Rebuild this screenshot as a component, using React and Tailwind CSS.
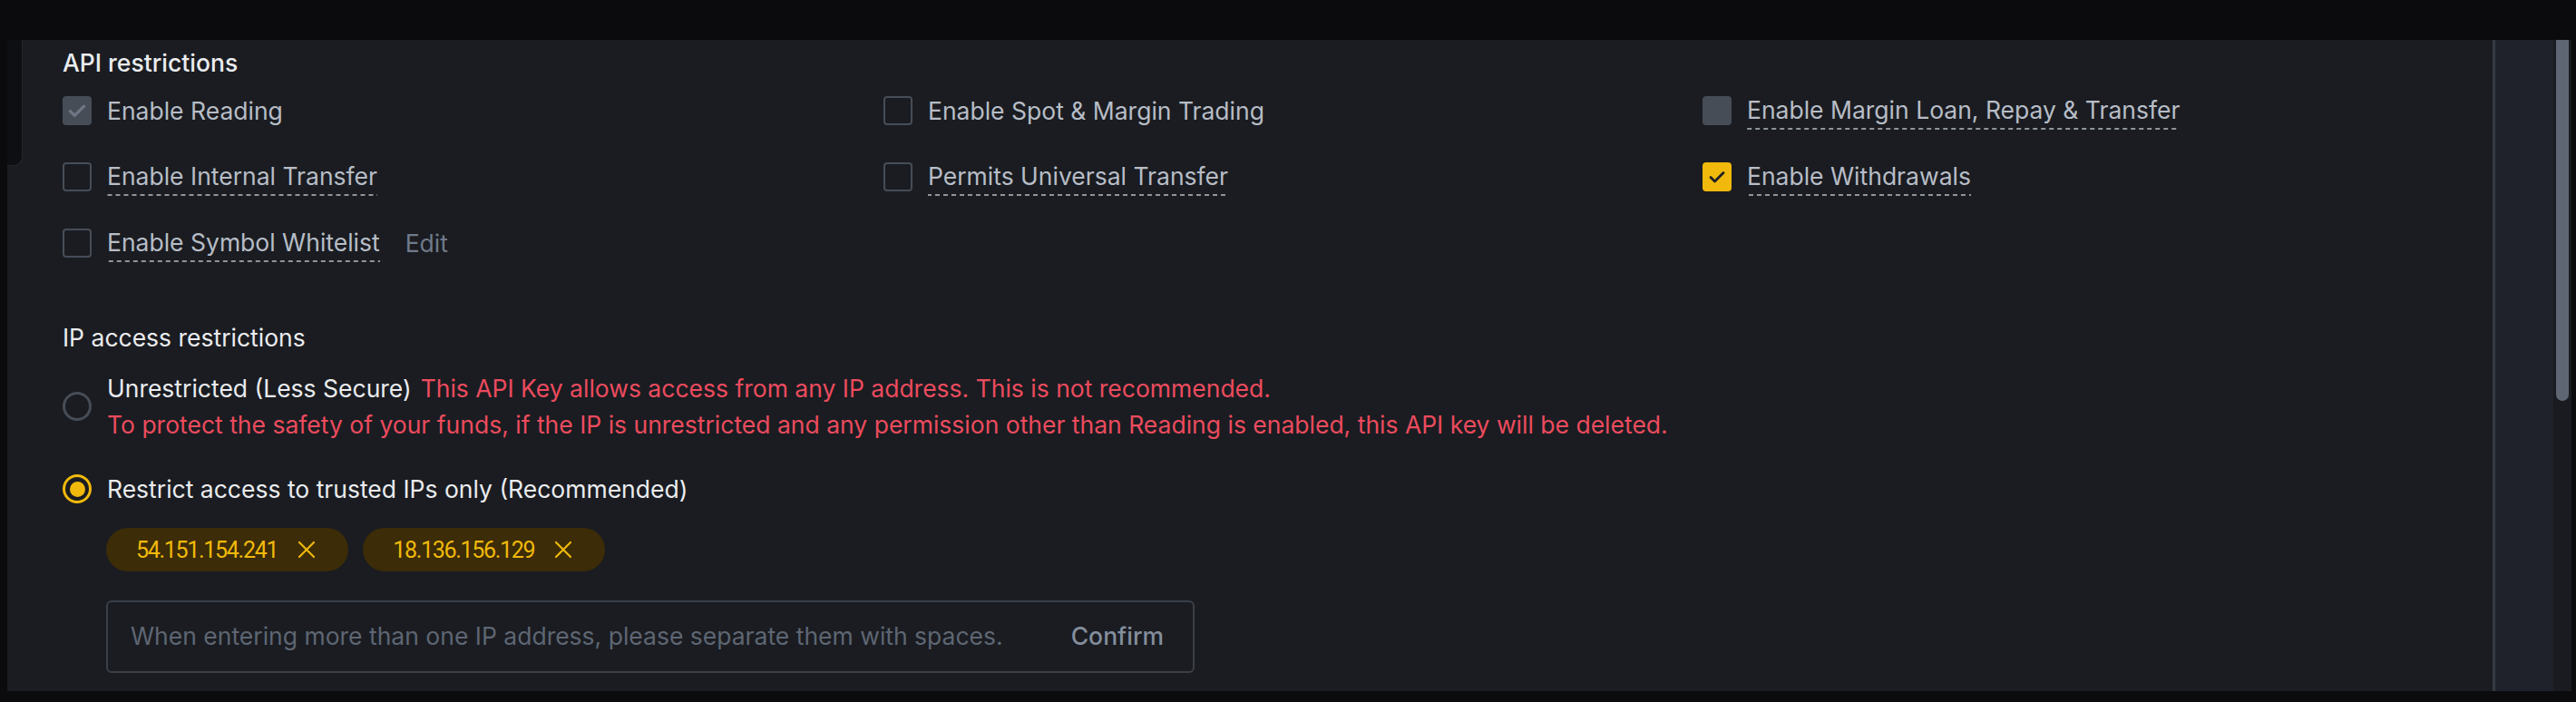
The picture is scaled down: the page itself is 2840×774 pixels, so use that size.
import React from "react";

const FONT = { fontFamily: "Inter, 'Noto Sans', Arial, sans-serif" };

function CheckIcon({ color, w = 2.6, size = 22 }) {
  return (
    <svg width={size} height={size} viewBox="0 0 24 24" fill="none">
      <path d="M5 12.5l4.5 4.5L19 7.5" stroke={color} strokeWidth={w} strokeLinecap="round" strokeLinejoin="round" />
    </svg>
  );
}

function Box({ kind }) {
  if (kind === "readonly")
    return (
      <span className="flex h-[32px] w-[32px] shrink-0 items-center justify-center rounded-[4px] bg-[#474d57]">
        <CheckIcon color="#6f7785" w={3} size={26} />
      </span>
    );
  if (kind === "disabled")
    return <span className="h-[32px] w-[32px] shrink-0 rounded-[4px] bg-[#474d57]" />;
  if (kind === "checked")
    return (
      <span className="flex h-[32px] w-[32px] shrink-0 items-center justify-center rounded-[4px] bg-[#f0b90b]">
        <CheckIcon color="#1e2026" w={2.8} size={24} />
      </span>
    );
  return <span className="h-[32px] w-[32px] shrink-0 rounded-[4px] border-2 border-[#474d57]" />;
}

function Option({ kind, label, dashed, children }) {
  return (
    <div className="flex h-[40px] items-center gap-[17px]">
      <Box kind={kind} />
      <span
        className={
          "text-[26.5px] leading-[40px] text-[#b7bdc6] whitespace-nowrap " +
          (dashed
            ? "pb-[2px] bg-[linear-gradient(to_right,#8d949e_60%,transparent_60%)] bg-[length:9px_2px] bg-repeat-x bg-bottom"
            : "")
        }
      >
        {label}
      </span>
      {children}
    </div>
  );
}

function Chip({ ip }) {
  return (
    <div className="flex h-[48px] items-center gap-[22px] rounded-full bg-[#3c2c07] pl-[33px] pr-[36px]">
      <span
        className="text-[25px] leading-none tracking-[-1.3px] text-[#f0b90b]"
        style={{ fontFamily: "Roboto, Arial, sans-serif" }}
      >
        {ip}
      </span>
      <svg width="20" height="20" viewBox="0 0 20 20" fill="none">
        <path d="M2 2l16 16M18 2L2 18" stroke="#f0b90b" strokeWidth="2.2" strokeLinecap="round" />
      </svg>
    </div>
  );
}

export default function App() {
  return (
    <div className="flex h-[774px] w-[2840px] flex-col bg-[#0b0b0e]" style={FONT}>
      <div className="h-[44px] shrink-0" />
      <div className="flex h-[718px] shrink-0">
        <div className="w-[8px] shrink-0" />
        <div className="relative h-full w-[2740px] shrink-0 overflow-hidden bg-[#1a1c21] pl-[61px] pt-[7px]">
          <div className="absolute left-0 top-0 h-[139px] w-[17px] rounded-br-[10px] border-b border-r border-[#22252b] bg-[#0d0f12]" />
          <div className="h-[36px] text-[26.5px] font-medium leading-[36px] text-[#eaecef]">API restrictions</div>

          <div className="mt-[15px] grid grid-cols-[905px_903px_1fr] gap-y-[33px]">
            <Option kind="readonly" label="Enable Reading" />
            <Option kind="empty" label="Enable Spot & Margin Trading" />
            <Option kind="disabled" label="Enable Margin Loan, Repay & Transfer" dashed />
            <Option kind="empty" label="Enable Internal Transfer" dashed />
            <Option kind="empty" label="Permits Universal Transfer" dashed />
            <Option kind="checked" label="Enable Withdrawals" dashed />
            <Option kind="empty" label="Enable Symbol Whitelist" dashed>
              <span className="ml-[11px] text-[26.5px] leading-[40px] text-[#707a8a]">Edit</span>
            </Option>
          </div>

          <div className="mt-[66px] h-[36px] text-[26.5px] leading-[36px] text-[#eaecef]">IP access restrictions</div>

          <div className="mt-[18px] flex items-center gap-[17px]">
            <span className="h-[32px] w-[32px] shrink-0 rounded-full border-[3px] border-[#474d57]" />
            <div className="text-[26.5px] leading-[40px]">
              <div className="whitespace-nowrap">
                <span className="text-[#eaecef]">Unrestricted (Less Secure)</span>
                <span className="ml-[10px] text-[#ec4b5e]">
                  This API Key allows access from any IP address. This is not recommended.
                </span>
              </div>
              <div className="whitespace-nowrap text-[#ec4b5e]">
                To protect the safety of your funds, if the IP is unrestricted and any permission other than Reading is enabled, this API key will be deleted.
              </div>
            </div>
          </div>

          <div className="mt-[31px] flex h-[40px] items-center gap-[17px]">
            <span className="flex h-[32px] w-[32px] shrink-0 items-center justify-center rounded-full border-[3px] border-[#f0b90b]">
              <span className="h-[17px] w-[17px] rounded-full bg-[#f0b90b]" />
            </span>
            <span className="text-[26.5px] leading-[40px] text-[#eaecef] whitespace-nowrap">
              Restrict access to trusted IPs only (Recommended)
            </span>
          </div>

          <div className="ml-[48px] mt-[23px] flex gap-[16px]">
            <Chip ip="54.151.154.241" />
            <Chip ip="18.136.156.129" />
          </div>

          <div className="ml-[48px] mt-[32px] flex h-[80px] w-[1200px] items-center justify-between rounded-[6px] border-2 border-[#3a3f48] pl-[25px] pr-[32px]">
            <span className="text-[26.5px] text-[#5e6673] whitespace-nowrap">
              When entering more than one IP address, please separate them with spaces.
            </span>
            <span className="text-[26.5px] font-medium text-[#848e9c]">Confirm</span>
          </div>
        </div>
        <div className="w-[3px] shrink-0 bg-[#363a42]" />
        <div className="w-[64px] shrink-0 bg-[#1f222a]" />
        <div className="flex w-[20px] shrink-0 flex-col items-center bg-[#191b20]">
          <div className="h-[398px] w-[14px] rounded-b-full bg-[#5e6673]" />
        </div>
        <div className="w-[5px] shrink-0" />
      </div>
    </div>
  );
}
